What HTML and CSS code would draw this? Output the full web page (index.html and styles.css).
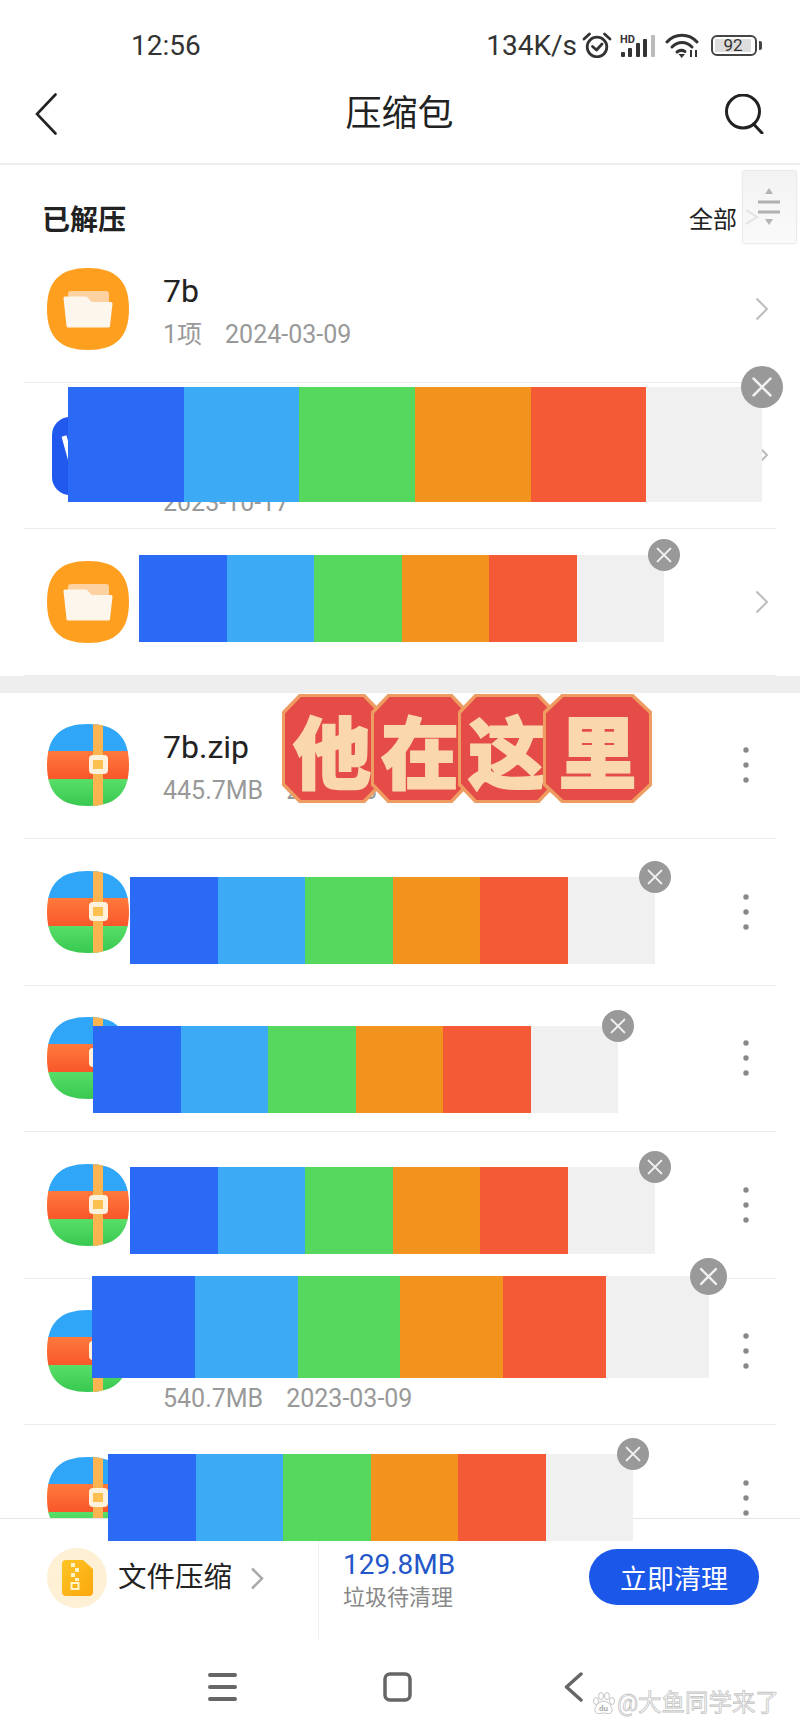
FILE: index.html
```html
<!DOCTYPE html>
<html lang="zh-CN">
<head>
  <meta charset="UTF-8" />
  <meta name="viewport" content="width=device-width, initial-scale=1.0"/>
  <title>压缩包</title>
  <link rel="stylesheet" href="styles.css">
</head>
<body>
  <!-- Iconos compartidos -->
  <svg class="defs" width="0" height="0">
    <defs>
      <clipPath id="squircle">
        <path d="M41 0C69 0 82 13 82 41C82 69 69 82 41 82C13 82 0 69 0 41C0 13 13 0 41 0Z"/>
      </clipPath>
      <linearGradient id="g-orange" x1="0" y1="0" x2="0" y2="1">
        <stop offset="0%" stop-color="#ff7a3c"/>
        <stop offset="100%" stop-color="#f8552a"/>
      </linearGradient>
      <linearGradient id="g-green" x1="0" y1="0" x2="0" y2="1">
        <stop offset="0%" stop-color="#58de68"/>
        <stop offset="100%" stop-color="#38c850"/>
      </linearGradient>
      <linearGradient id="g-zip" x1="0" y1="0" x2="1" y2="1">
        <stop offset="0%" stop-color="#fdc426"/>
        <stop offset="100%" stop-color="#fca70c"/>
      </linearGradient>
      <symbol id="i-folder" viewBox="0 0 82 82">
        <g clip-path="url(#squircle)">
          <rect width="82" height="82" fill="#ff9f1f"/>
          <rect x="21" y="23" width="41" height="22" rx="3" fill="#fed2a0"/>
          <path d="M18 30H39L44 35.500H64L61.500 58H21Z" fill="#fdf6ec" stroke="#fdf6ec" stroke-width="3" stroke-linejoin="round"/>
        </g>
      </symbol>
      <symbol id="i-zip" viewBox="0 0 82 82">
        <g clip-path="url(#squircle)">
          <rect width="82" height="28" fill="#2fa6f8"/>
          <rect y="27" width="82" height="29" fill="url(#g-orange)"/>
          <rect y="55" width="82" height="27" fill="url(#g-green)"/>
          <rect x="46" width="10" height="82" fill="#fbb44f"/>
          <rect x="42" y="31" width="19" height="19" rx="4" fill="#fdf1dc"/>
          <rect x="46" y="36" width="10" height="9" fill="#fbc04f"/>
        </g>
      </symbol>
      <symbol id="i-close" viewBox="0 0 40 40">
        <circle cx="20" cy="20" r="20" fill="#999"/>
        <path d="M12 12L28 28M28 12L12 28" stroke="#f2f2f2" stroke-width="2.500" stroke-linecap="round"/>
      </symbol>
      <symbol id="i-more" viewBox="0 0 6 36">
        <circle cx="3" cy="3" r="2.700" fill="#888"/>
        <circle cx="3" cy="18" r="2.700" fill="#888"/>
        <circle cx="3" cy="33" r="2.700" fill="#888"/>
      </symbol>
      <symbol id="i-next" viewBox="0 0 14 24">
        <path d="M1.500 1.500L12 12L1.500 22.500" fill="none" stroke="#bdbdbd" stroke-width="2"/>
      </symbol>
    </defs>
  </svg>

  <div class="page">
    <div class="status">
      <span class="time">12:56</span>
      <div class="status-right">
        <span class="speed">134K/s</span>
        <svg class="alarm" width="30" height="26" viewBox="0 0 30 26" fill="none" stroke="#333" stroke-width="2.800" stroke-linecap="round" stroke-linejoin="round">
          <circle cx="15" cy="15" r="9.800"/>
          <path d="M10.500 14.500L14.500 18L20 12"/>
          <path d="M2 7L7.500 2M22.500 2L28 7"/>
        </svg>
        <svg class="signal" width="35" height="23" viewBox="0 0 35 23">
          <text class="hd" x="0" y="9">HD</text>
          <rect x="1" y="18" width="4" height="5" rx="1" fill="#333"/>
          <rect x="8" y="14" width="4" height="9" rx="1" fill="#333"/>
          <rect x="16" y="9" width="4" height="14" rx="1" fill="#333"/>
          <rect x="23" y="5" width="4" height="18" rx="1" fill="#333"/>
          <rect x="31" y="1" width="4" height="22" rx="1" fill="#bbb"/>
        </svg>
        <svg class="wifi" width="34" height="25" viewBox="0 0 34 25" fill="none" stroke="#333" stroke-width="3" stroke-linecap="round">
          <path d="M2 9C10 0 24 0 32 9"/>
          <path d="M7 14C13 8 21 8 27 14"/>
          <path d="M12 19C14.500 17 17.500 17 20 18.500"/>
          <path d="M13.500 21H20L16.700 25Z" fill="#333" stroke="none"/>
          <path d="M26 17V24M31 17V24" stroke-width="2" stroke-linecap="butt"/>
        </svg>
        <div class="battery"><span class="battery-fill">92</span></div>
        <span class="battery-tip"></span>
      </div>
    </div>

    <header class="topbar">
      <div class="top-side">
        <svg width="22" height="42" viewBox="0 0 22 42" fill="none" stroke="#222" stroke-width="2.600" stroke-linecap="round"><path d="M20.500 1.500L2 21L20.500 40.500"/></svg>
      </div>
      <h1 class="title">压缩包</h1>
      <div class="top-side top-side-right">
        <svg width="40" height="40" viewBox="0 0 40 40" fill="none" stroke="#222" stroke-width="3" stroke-linecap="round"><circle cx="19" cy="17.500" r="16.500"/><path d="M29.500 30L38 39"/></svg>
      </div>
    </header>

    <main class="content">
      <div class="section-head">
        <span class="section-title">已解压</span>
        <span class="section-all">全部</span>
      </div>

      <div class="row">
        <svg class="icon"><use href="#i-folder"/></svg>
        <div class="row-text">
          <div class="name">7b</div>
          <div class="sub"><span>1项</span><span>2024-03-09</span></div>
        </div>
        <svg class="next"><use href="#i-next"/></svg>
      </div>

      <div class="row">
        <svg class="icon" viewBox="0 0 82 82">
          <rect x="5" y="3" width="77" height="78" rx="18" fill="#2159ef"/>
          <path d="M17 22L28 62L41 30L54 62L65 22" fill="none" stroke="#fff" stroke-width="5"/>
        </svg>
        <div class="row-text">
          <div class="name name-long"></div>
          <div class="sub"><span>2023-10-17</span></div>
        </div>
        <svg class="next"><use href="#i-next"/></svg>
      </div>

      <div class="row">
        <svg class="icon"><use href="#i-folder"/></svg>
        <svg class="next"><use href="#i-next"/></svg>
      </div>

      <div class="gap"></div>

      <div class="row">
        <svg class="icon"><use href="#i-zip"/></svg>
        <div class="row-text">
          <div class="name">7b.zip</div>
          <div class="sub"><span>445.7MB</span><span>2024-03-09</span></div>
        </div>
        <svg class="more"><use href="#i-more"/></svg>
      </div>

      <div class="row">
        <svg class="icon"><use href="#i-zip"/></svg>
        <svg class="more"><use href="#i-more"/></svg>
      </div>

      <div class="row">
        <svg class="icon"><use href="#i-zip"/></svg>
        <div class="row-text">
          <div class="name">竹竹</div>
        </div>
        <svg class="more"><use href="#i-more"/></svg>
      </div>

      <div class="row">
        <svg class="icon"><use href="#i-zip"/></svg>
        <svg class="more"><use href="#i-more"/></svg>
      </div>

      <div class="row">
        <svg class="icon"><use href="#i-zip"/></svg>
        <div class="row-text">
          <div class="name name-long"></div>
          <div class="sub"><span>540.7MB</span><span>2023-03-09</span></div>
        </div>
        <svg class="more"><use href="#i-more"/></svg>
      </div>

      <div class="row">
        <svg class="icon"><use href="#i-zip"/></svg>
        <svg class="more"><use href="#i-more"/></svg>
      </div>
    </main>

    <footer class="footer">
      <div class="tools">
        <div class="tool-left">
          <div class="zip-badge">
            <svg width="31" height="36" viewBox="0 0 31 36">
              <path d="M4 0H21L31 9V32Q31 36 27 36H4Q0 36 0 32V4Q0 0 4 0Z" fill="url(#g-zip)"/>
              <path d="M9 3h4v4h-4zM13 8h4v4h-4zM9 13h4v4h-4zM13 18h4v3h-4z" fill="#fff3c8"/>
              <rect x="9.500" y="23" width="7" height="6" fill="none" stroke="#fff3c8" stroke-width="2"/>
            </svg>
          </div>
          <span class="tool-label">文件压缩</span>
          <svg class="tool-next" width="14" height="23" viewBox="0 0 14 23" fill="none" stroke="#aaa" stroke-width="2.500"><path d="M2 1.500L12 11.500L2 21.500"/></svg>
        </div>
        <div class="tool-right">
          <div class="trash">
            <div class="trash-size">129.8MB</div>
            <div class="trash-label">垃圾待清理</div>
          </div>
          <button class="clean">立即清理</button>
        </div>
      </div>
      <nav class="sysnav">
        <svg width="29" height="29" viewBox="0 0 29 29" stroke="#666" stroke-width="4" stroke-linecap="round"><path d="M2 3H27M2 15H27M2 27H27"/></svg>
        <svg class="nav-home" width="29" height="30" viewBox="0 0 29 30" fill="none" stroke="#666" stroke-width="3.500"><rect x="2" y="2" width="25" height="26" rx="5"/></svg>
        <svg class="nav-back" width="19" height="30" viewBox="0 0 19 30" fill="none" stroke="#666" stroke-width="3.500" stroke-linecap="round" stroke-linejoin="round"><path d="M17 2L2.500 15L17 28"/></svg>
      </nav>
    </footer>

    <!-- Marcas pintadas encima de la captura -->
    <div class="palette p-row2 palette-big">
      <span class="c1"></span><span class="c2"></span><span class="c3"></span><span class="c4"></span><span class="c5"></span><span class="c6"></span>
      <svg class="close"><use href="#i-close"/></svg>
    </div>
    <div class="palette p-row3">
      <span class="c1"></span><span class="c2"></span><span class="c3"></span><span class="c4"></span><span class="c5"></span><span class="c6"></span>
      <svg class="close"><use href="#i-close"/></svg>
    </div>
    <div class="palette p-zip2">
      <span class="c1"></span><span class="c2"></span><span class="c3"></span><span class="c4"></span><span class="c5"></span><span class="c6"></span>
      <svg class="close"><use href="#i-close"/></svg>
    </div>
    <div class="palette p-zip3">
      <span class="c1"></span><span class="c2"></span><span class="c3"></span><span class="c4"></span><span class="c5"></span><span class="c6"></span>
      <svg class="close"><use href="#i-close"/></svg>
    </div>
    <div class="palette p-zip4">
      <span class="c1"></span><span class="c2"></span><span class="c3"></span><span class="c4"></span><span class="c5"></span><span class="c6"></span>
      <svg class="close"><use href="#i-close"/></svg>
    </div>
    <div class="palette p-zip5 palette-mid">
      <span class="c1"></span><span class="c2"></span><span class="c3"></span><span class="c4"></span><span class="c5"></span><span class="c6"></span>
      <svg class="close"><use href="#i-close"/></svg>
    </div>
    <div class="palette p-zip6">
      <span class="c1"></span><span class="c2"></span><span class="c3"></span><span class="c4"></span><span class="c5"></span><span class="c6"></span>
      <svg class="close"><use href="#i-close"/></svg>
    </div>

    <div class="sticker">
      <span>他</span><span>在</span><span>这</span><span>里</span>
    </div>

    <div class="handle">
      <svg width="53" height="72" viewBox="0 0 53 72" fill="none">
        <path d="M3 39L14 46L3 53" stroke="#e2e2e2" stroke-width="2"/>
        <path d="M26 17L30 23H22Z" fill="#b4b4b4"/>
        <path d="M15 31H37M15 41H37" stroke="#b0b0b0" stroke-width="3"/>
        <path d="M22 48H30L26 54Z" fill="#b4b4b4"/>
      </svg>
    </div>

    <div class="watermark">
      <svg width="23" height="23" viewBox="0 0 23 23" fill="#fff" stroke="#c4c4c4" stroke-width="1">
        <ellipse cx="4" cy="9" rx="2.500" ry="3.500"/>
        <ellipse cx="9" cy="4" rx="2.500" ry="3.500"/>
        <ellipse cx="15" cy="4" rx="2.500" ry="3.500"/>
        <ellipse cx="20" cy="9" rx="2.500" ry="3.500"/>
        <path d="M11.500 9C16 9 21 15 20 19C19 23 14 21 11.500 21C9 21 4 23 3 19C2 15 7 9 11.500 9Z"/>
        <text class="du" x="11.500" y="19">du</text>
      </svg>
      <span>@大鱼同学来了</span>
    </div>
  </div>
</body>
</html>
```
FILE: styles.css
```css
html, body {
  margin: 0;
  padding: 0;
  height: 100%;
  overflow: hidden;
  background: #fff;
  font-family: Roboto, "Noto Sans CJK SC", sans-serif;
  color: #222;
}

svg {
  display: block;
}

.defs {
  position: absolute;
}

.page {
  position: relative;
  display: flex;
  flex-direction: column;
  width: 800px;
  height: 1733px;
  overflow: hidden;
}

/* Barra de estado */
.status {
  display: flex;
  justify-content: space-between;
  align-items: center;
  flex: none;
  box-sizing: border-box;
  height: 70px;
  padding: 20px 43px 0 131px;
  color: #333;
  font-size: 28px;
}

.status-right {
  display: flex;
  align-items: center;
}

.alarm {
  margin-left: 5px;
}

.signal {
  margin-left: 8px;
}

.hd {
  font-size: 11px;
  font-weight: 700;
  fill: #333;
}

.wifi {
  margin-left: 10px;
}

.battery {
  box-sizing: border-box;
  width: 46px;
  height: 21px;
  margin-left: 12px;
  padding: 2px;
  border: 2px solid #444;
  border-radius: 6px;
}

.battery-fill {
  display: block;
  width: 36px;
  height: 13px;
  background: #ddd;
  color: #333;
  font-size: 17px;
  line-height: 13px;
  text-align: center;
}

.battery-tip {
  width: 3px;
  height: 9px;
  margin-left: 2px;
  margin-right: -5px;
  border-radius: 0 2px 2px 0;
  background: #444;
}

/* Cabecera */
.topbar {
  display: flex;
  justify-content: space-between;
  align-items: center;
  flex: none;
  box-sizing: border-box;
  height: 95px;
  padding: 0 36px 5px 35px;
  border-bottom: 2px solid #eee;
}

.top-side {
  display: flex;
  width: 40px;
}

.top-side-right {
  justify-content: flex-end;
}

.title {
  margin: 0;
  font-size: 36px;
  font-weight: 400;
  line-height: 50px;
}

/* Lista */
.content {
  flex: 1;
  min-height: 0;
  overflow: hidden;
}

.section-head {
  display: flex;
  justify-content: space-between;
  align-items: center;
  box-sizing: border-box;
  height: 71px;
  padding: 34px 63px 0 42px;
}

.section-title {
  font-size: 28px;
  font-weight: 700;
}

.section-all {
  font-size: 24px;
}

.row {
  display: flex;
  align-items: center;
  box-sizing: border-box;
  height: 146.500px;
  margin: 0 24px;
  padding-left: 23px;
  border-bottom: 1.500px solid #ececec;
}

.icon {
  flex: none;
  width: 82px;
  height: 82px;
}

.row-text {
  margin-left: 34px;
  padding-top: 8px;
}

.name {
  font-size: 32px;
  line-height: 44px;
  color: #222;
}

.name-long {
  height: 88px;
}

.sub {
  display: flex;
  gap: 23px;
  font-size: 25px;
  line-height: 44px;
  color: #999;
}

.next {
  width: 14px;
  height: 24px;
  margin-left: auto;
  margin-right: 7px;
}

.more {
  width: 6px;
  height: 36px;
  margin-left: auto;
  margin-right: 27px;
}

.gap {
  height: 17px;
  background: #eee;
}

/* Barra inferior */
.footer {
  position: relative;
  flex: none;
  box-sizing: border-box;
  height: 215px;
  border-top: 1.500px solid #e5e5e5;
  background: #fff;
}

.tools {
  display: flex;
  height: 120px;
}

.tool-left {
  display: flex;
  align-items: flex-start;
  flex: none;
  box-sizing: border-box;
  width: 319px;
  margin-top: 22px;
  padding: 7px 0 0 47px;
  border-right: 1px solid #f0f0f0;
}

.zip-badge {
  display: flex;
  justify-content: center;
  align-items: center;
  width: 60px;
  height: 60px;
  border-radius: 50%;
  background: #fdf0d5;
}

.tool-label {
  margin-left: 11px;
  font-size: 28.500px;
  line-height: 60px;
}

.tool-next {
  margin: 19px 0 0 18px;
}

.tool-right {
  display: flex;
  justify-content: space-between;
  align-items: flex-start;
  flex: 1;
  padding: 30px 41px 0 24px;
}

.trash-size {
  font-size: 28px;
  line-height: 32px;
  color: #2456c8;
}

.trash-label {
  margin-top: 1px;
  font-size: 22px;
  line-height: 32px;
  color: #888;
}

.clean {
  width: 170px;
  height: 56px;
  border: none;
  border-radius: 28px;
  background: #1b57e8;
  color: #fff;
  font-family: inherit;
  font-size: 27px;
}

.sysnav {
  display: flex;
  align-items: flex-start;
  padding: 33px 0 0 208px;
}

.nav-home {
  margin-left: 146px;
}

.nav-back {
  margin-left: 152px;
}

/* Franjas de color superpuestas */
.palette {
  position: absolute;
  display: flex;
  height: 87px;
  width: 525px;
}

.palette span {
  flex: 1;
}

.c1 { background: #2a6af4; }
.c2 { background: #3daaf5; }
.c3 { background: #55d85d; }
.c4 { background: #f2931e; }
.c5 { background: #f45a35; }
.c6 { background: #f0f0f0; }

.close {
  position: absolute;
  top: -16px;
  right: -16px;
  width: 32px;
  height: 32px;
}

.p-row2 { left: 68px; top: 387px; }
.p-row3 { left: 139px; top: 555px; }
.p-zip2 { left: 130px; top: 877px; }
.p-zip3 { left: 93px; top: 1026px; }
.p-zip4 { left: 130px; top: 1167px; }
.p-zip5 { left: 92px; top: 1276px; }
.p-zip6 { left: 108px; top: 1454px; }

.palette-big {
  width: 694px;
  height: 115px;
}

.palette-big .close {
  top: -21px;
  right: -21px;
  width: 42px;
  height: 42px;
}

.palette-mid {
  width: 617px;
  height: 102px;
}

.palette-mid .close {
  top: -18px;
  right: -18px;
  width: 37px;
  height: 37px;
}

/* Etiqueta roja */
.sticker {
  position: absolute;
  left: 282px;
  top: 694px;
  display: flex;
}

.sticker span {
  position: relative;
  display: flex;
  justify-content: center;
  align-items: center;
  width: 98px;
  height: 109px;
  margin-left: -11px;
  background: #ee9c62;
  clip-path: polygon(17% 0, 83% 0, 100% 16%, 100% 84%, 83% 100%, 17% 100%, 0 84%, 0 16%);
  color: #fad8ac;
  font-family: "Noto Sans CJK SC", sans-serif;
  font-size: 78px;
  font-weight: 900;
  line-height: 1;
  -webkit-text-stroke: 2px #fad8ac;
  isolation: isolate;
}

.sticker span::before {
  content: "";
  position: absolute;
  inset: 3px;
  z-index: -1;
  background: #e54b47;
  clip-path: polygon(17% 0, 83% 0, 100% 16%, 100% 84%, 83% 100%, 17% 100%, 0 84%, 0 16%);
}

.sticker span:first-child {
  width: 100px;
  margin-left: 0;
}

.sticker span:last-child {
  width: 109px;
  margin-left: -13px;
}

/* Asa flotante */
.handle {
  position: absolute;
  left: 743px;
  top: 171px;
  width: 53px;
  height: 72px;
  background: linear-gradient(#f3f3f3, #fafafa);
  box-shadow: 0 0 2px rgba(0,0,0,0.25);
}

/* Marca de agua */
.watermark {
  position: absolute;
  left: 592px;
  top: 1686px;
  display: flex;
  align-items: center;
  gap: 2px;
  color: #fff;
  font-size: 23.500px;
  line-height: 34px;
  -webkit-text-stroke: 0.800px #c4c4c4;
}

.du {
  font-size: 8px;
  font-weight: 700;
  text-anchor: middle;
  fill: #aaa;
  stroke: none;
  -webkit-text-stroke: 0;
}
```
